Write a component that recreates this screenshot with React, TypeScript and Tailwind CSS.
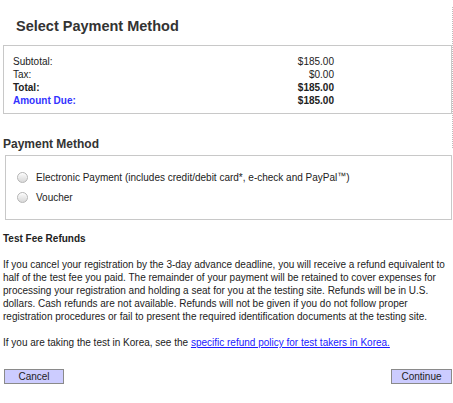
import React from "react";

const rows = [
  { label: "Subtotal:", value: "$185.00", kind: "plain" },
  { label: "Tax:", value: "$0.00", kind: "plain" },
  { label: "Total:", value: "$185.00", kind: "bold" },
  { label: "Amount Due:", value: "$185.00", kind: "due" },
];

function Radio() {
  return (
    <span className="inline-block w-[11px] h-[11px] shrink-0 rounded-full border border-[#b5b5b5] bg-gradient-to-b from-[#fafafa] to-[#d9d9d9] shadow-[inset_0_1px_1px_rgba(255,255,255,0.9)]" />
  );
}

export default function App() {
  return (
    <div className="relative w-[453px] h-[403px] bg-white text-[#222] font-['Liberation_Sans',Arial,sans-serif] text-[10px] leading-[13px] overflow-hidden">
      {/* frame edge on the right */}
      <div className="absolute left-[452px] top-[7px] h-[141px] border-l border-dotted border-[#bdbdbd]" />

      <h1 className="pl-[16px] pt-[18px] text-[14.5px] leading-[17px] font-bold text-[#333]">
        Select Payment Method
      </h1>

      {/* order summary */}
      <div className="ml-[3px] mt-[10px] w-[449px] border border-[#c8c8c8] pt-[9px] pb-[6px] pl-[9px]">
        <div className="grid w-[321px] grid-cols-[1fr_auto]">
          {rows.map((r) => (
            <React.Fragment key={r.label}>
              <div
                className={
                  r.kind === "due"
                    ? "font-bold text-[#3333ff]"
                    : r.kind === "bold"
                    ? "font-bold"
                    : ""
                }
              >
                {r.label}
              </div>
              <div className={r.kind === "plain" ? "text-right" : "text-right font-bold"}>
                {r.value}
              </div>
            </React.Fragment>
          ))}
        </div>
      </div>

      <h2 className="ml-[3px] mt-[23px] text-[12px] leading-[14px] font-bold text-[#333]">
        Payment Method
      </h2>

      <div className="ml-[5px] mt-[4px] w-[447px] h-[65px] border border-[#c8c8c8] pt-[15px] pl-[11px] flex flex-col gap-[7px]">
        <label className="flex items-center gap-[8px]">
          <Radio />
          <span>
            Electronic Payment (includes credit/debit card*, e-check and PayPal
            <sup className="text-[9px] relative -top-[2px]">™</sup>)
          </span>
        </label>
        <label className="flex items-center gap-[8px]">
          <Radio />
          <span>Voucher</span>
        </label>
      </div>

      <h3 className="ml-[3px] mt-[12px] font-bold text-[#222]">Test Fee Refunds</h3>

      <p className="ml-[3px] mt-[13px] w-[445px]">
        If you cancel your registration by the 3-day advance deadline, you will receive a refund equivalent to
        half of the test fee you paid. The remainder of your payment will be retained to cover expenses for
        processing your registration and holding a seat for you at the testing site. Refunds will be in U.S.
        dollars. Cash refunds are not available. Refunds will not be given if you do not follow proper
        registration procedures or fail to present the required identification documents at the testing site.
      </p>

      <p className="ml-[3px] mt-[13px]">
        If you are taking the test in Korea, see the{" "}
        <a href="#" className="text-[#1a1aff] underline">
          specific refund policy for test takers in Korea.
        </a>
      </p>

      <div className="mt-[20px] flex justify-between pl-[4px] pr-[1px]">
        <button className="w-[60px] h-[15px] border border-[#8a8a8a] bg-[#ccccff] text-[10px] leading-[13px] text-[#222]">
          Cancel
        </button>
        <button className="w-[61px] h-[15px] border border-[#8a8a8a] bg-[#ccccff] text-[10px] leading-[13px] text-[#222]">
          Continue
        </button>
      </div>
    </div>
  );
}
